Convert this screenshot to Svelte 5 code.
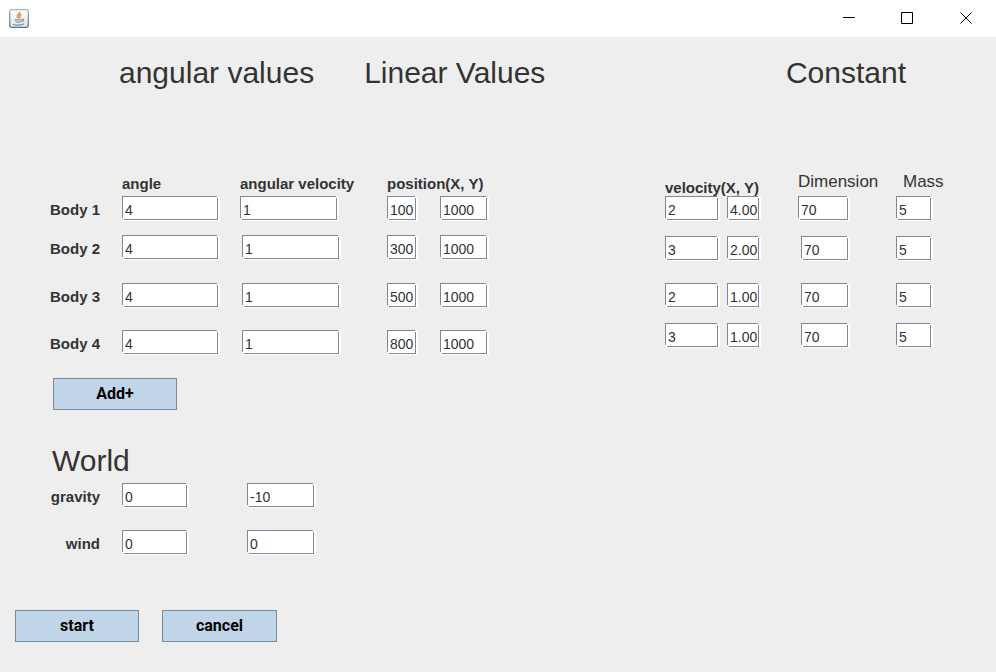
<script>
  const leftRows = [
    { name: 'Body 1', angle: '4', spin: '1', x: '100', y: '1000' },
    { name: 'Body 2', angle: '4', spin: '1', x: '300', y: '1000' },
    { name: 'Body 3', angle: '4', spin: '1', x: '500', y: '1000' },
    { name: 'Body 4', angle: '4', spin: '1', x: '800', y: '1000' }
  ];
  const rightRows = [
    { name: 'Body 1', vx: '2', vy: '4.00', dimension: '70', mass: '5' },
    { name: 'Body 2', vx: '3', vy: '2.00', dimension: '70', mass: '5' },
    { name: 'Body 3', vx: '2', vy: '1.00', dimension: '70', mass: '5' },
    { name: 'Body 4', vx: '3', vy: '1.00', dimension: '70', mass: '5' }
  ];
  const world = [
    { name: 'gravity', x: '0', y: '-10' },
    { name: 'wind', x: '0', y: '0' }
  ];
</script>

<div class="window">
  <header class="titlebar">
    <svg class="java" viewBox="0 0 20 20" aria-hidden="true">
      <defs>
        <linearGradient id="tile" x1="0" y1="0" x2="0" y2="1">
          <stop offset="0" stop-color="#ffffff" />
          <stop offset="1" stop-color="#e2e2e2" />
        </linearGradient>
        <linearGradient id="edge" x1="0" y1="0" x2="0" y2="1">
          <stop offset="0" stop-color="#9db8cb" />
          <stop offset="1" stop-color="#55758f" />
        </linearGradient>
      </defs>
      <rect x="0.7" y="0.7" width="18.6" height="17.6" rx="1.8" fill="url(#tile)" stroke="url(#edge)" stroke-width="1.3" />
      <path d="M10.800 3C11.300 5 7.900 5.600 8.400 7.400C8.700 8.300 9.400 8.600 9.500 9.300M12.300 5.300C9.900 6.300 11.900 7.300 10.500 9" fill="none" stroke="#ec8a3e" stroke-width="1.700" />
      <path d="M5.800 10H13V11C13 12.800 12 13.700 10.800 13.700H8.200C6.800 13.700 5.800 12.500 5.800 11Z" fill="#8fabc0" />
      <path d="M6.500 11.700H12.300" stroke="#e6edf2" stroke-width="0.700" />
      <path d="M13 10.300C15.500 9.800 15.300 12.200 12.700 12.500M4.200 14.900C5 16.500 13.500 16.500 15 14.700" fill="none" stroke="#7595ad" stroke-width="1.200" />
    </svg>
    <div class="controls">
      <button type="button" aria-label="Minimize">
        <svg viewBox="0 0 13 13"><path d="M1 5.500H13" /></svg>
      </button>
      <button type="button" aria-label="Maximize">
        <svg viewBox="0 0 13 13"><path d="M0.500 0.500H11.500V11.500H0.500Z" /></svg>
      </button>
      <button type="button" aria-label="Close">
        <svg viewBox="0 0 13 13"><path d="M0.500 0.500L11.500 11.500M11.500 0.500L0.500 11.500" /></svg>
      </button>
    </div>
  </header>

  <main>
    <div class="headings">
      <h2>angular values</h2>
      <h2>Linear Values</h2>
      <h2 class="last">Constant</h2>
    </div>

    <div class="bodies">
      <div class="grid left">
        <span></span>
        <span class="head">angle</span>
        <span class="head">angular velocity</span>
        <span class="head span">position(X, Y)</span>
        {#each leftRows as row, i}
          <label for="angle-{i}">{row.name}</label>
          <input id="angle-{i}" class="angle" value={row.angle} />
          <input class="spin" class:inset={i > 0} aria-label="{row.name} angular velocity" value={row.spin} />
          <input class="px" aria-label="{row.name} position X" value={row.x} />
          <input class="py" aria-label="{row.name} position Y" value={row.y} />
        {/each}
      </div>

      <div class="grid right">
        <span class="head low span">velocity(X, Y)</span>
        <span class="head light">Dimension</span>
        <span class="head light mass-head">Mass</span>
        {#each rightRows as row, i}
          <input class="vx" aria-label="{row.name} velocity X" value={row.vx} />
          <input class="vy" aria-label="{row.name} velocity Y" value={row.vy} />
          <input class="dimension" class:short={i > 0} aria-label="{row.name} dimension" value={row.dimension} />
          <input class="mass" aria-label="{row.name} mass" value={row.mass} />
        {/each}
      </div>
    </div>

    <button type="button" class="action add">Add+</button>

    <section>
      <h2>World</h2>
      <div class="grid world">
        {#each world as row}
          <label for="{row.name}-x">{row.name}</label>
          <input id="{row.name}-x" class="wx" value={row.x} />
          <input class="wy" aria-label="{row.name} Y" value={row.y} />
        {/each}
      </div>
    </section>

    <div class="footer">
      <button type="button" class="action">start</button>
      <button type="button" class="action cancel">cancel</button>
    </div>
  </main>
</div>

<style>
  :global(body) {
    margin: 0;
    background: #eeeeee;
  }
  .window {
    min-height: 100vh;
    background: #eeeeee;
    color: #333333;
    font-family: "Liberation Sans", Arial, sans-serif;
    font-size: 15px;
    line-height: 16px;
  }
  .titlebar {
    display: flex;
    align-items: center;
    justify-content: space-between;
    height: 37px;
    padding-left: 9px;
    background: #ffffff;
  }
  .java {
    width: 20px;
    height: 20px;
  }
  .controls {
    display: flex;
    height: 100%;
  }
  .controls button {
    display: flex;
    align-items: center;
    justify-content: center;
    width: 59px;
    padding: 0;
    border: 0;
    background: none;
  }
  .controls svg {
    width: 13px;
    height: 13px;
    fill: none;
    stroke: #000000;
  }
  main {
    padding: 18px 0 30px;
  }
  h2 {
    margin: 0;
    font-size: 30px;
    line-height: 36px;
    font-weight: 400;
    white-space: nowrap;
  }
  .headings {
    display: flex;
    gap: 50px;
    padding: 0 90px 0 119px;
  }
  .headings .last {
    margin-left: auto;
  }
  .bodies {
    display: flex;
    align-items: flex-start;
    justify-content: space-between;
    margin-top: 85px;
    padding: 0 46px 0 50px;
  }
  .grid {
    display: grid;
    align-items: start;
    justify-items: start;
  }
  .left {
    grid-template-columns: 72px 118px 147px 53px 49px;
    grid-template-rows: 20px 39px 48px 47px 25px;
  }
  .right {
    grid-template-columns: 62px 71px 98px 54px;
    grid-template-rows: 20px 40px 47px 40px 25px;
  }
  .world {
    grid-template-columns: 72px 125px 69px;
    grid-template-rows: 47px 25px;
    margin-top: 4px;
  }
  .head {
    align-self: end;
    padding-bottom: 4px;
    font-weight: 700;
    white-space: nowrap;
  }
  .span {
    grid-column: span 2;
  }
  .low {
    padding-bottom: 0;
  }
  .light {
    padding-bottom: 6px;
    font-size: 17px;
    font-weight: 400;
  }
  .mass-head {
    padding-left: 7px;
  }
  label {
    justify-self: end;
    padding: 6px 22px 0 0;
    font-weight: 700;
    white-space: nowrap;
  }
  /* Etched field: a slate frame with a white highlight shifted down and right. */
  input {
    --line: linear-gradient(#7a8a99, #7a8a99);
    box-sizing: border-box;
    height: 25px;
    margin: 0;
    padding: 2px 0 0 3px;
    border: 0;
    border-radius: 0;
    outline: 0;
    background:
      var(--line) 0 0 / calc(100% - 3px) 1px,
      var(--line) 0 0 / 1px calc(100% - 3px),
      var(--line) right 2px top 2px / 1px calc(100% - 3px),
      var(--line) left 2px bottom 1px / calc(100% - 4px) 1px,
      linear-gradient(#ffffff, #ffffff) 1px 1px / 100% 100%;
    background-repeat: no-repeat;
    color: #333333;
    font-family: inherit;
    font-size: 14px;
    line-height: 16px;
  }
  .angle { width: 98px; }
  .spin { width: 99px; }
  .inset { margin-left: 2px; }
  .px { width: 31px; }
  .py { width: 49px; }
  .vx { width: 55px; }
  .vy { width: 34px; }
  .dimension { width: 52px; }
  .short { width: 49px; margin-left: 3px; }
  .mass { width: 37px; }
  .wx { width: 67px; }
  .wy { width: 69px; }
  .action {
    width: 124px;
    height: 32px;
    padding: 0;
    border: 1px solid #7a8a99;
    border-radius: 0;
    background: #c0d5e8;
    color: #000000;
    font-family: Roboto, "Open Sans", sans-serif;
    font-size: 16px;
    line-height: 20px;
    font-weight: 700;
  }
  .add {
    display: block;
    margin: 23px 0 0 53px;
  }
  .cancel {
    width: 115px;
  }
  section {
    margin-top: 33px;
    padding-left: 50px;
  }
  section h2 {
    padding-left: 2px;
  }
  .footer {
    display: flex;
    gap: 23px;
    margin-top: 55px;
    padding-left: 15px;
  }
</style>
